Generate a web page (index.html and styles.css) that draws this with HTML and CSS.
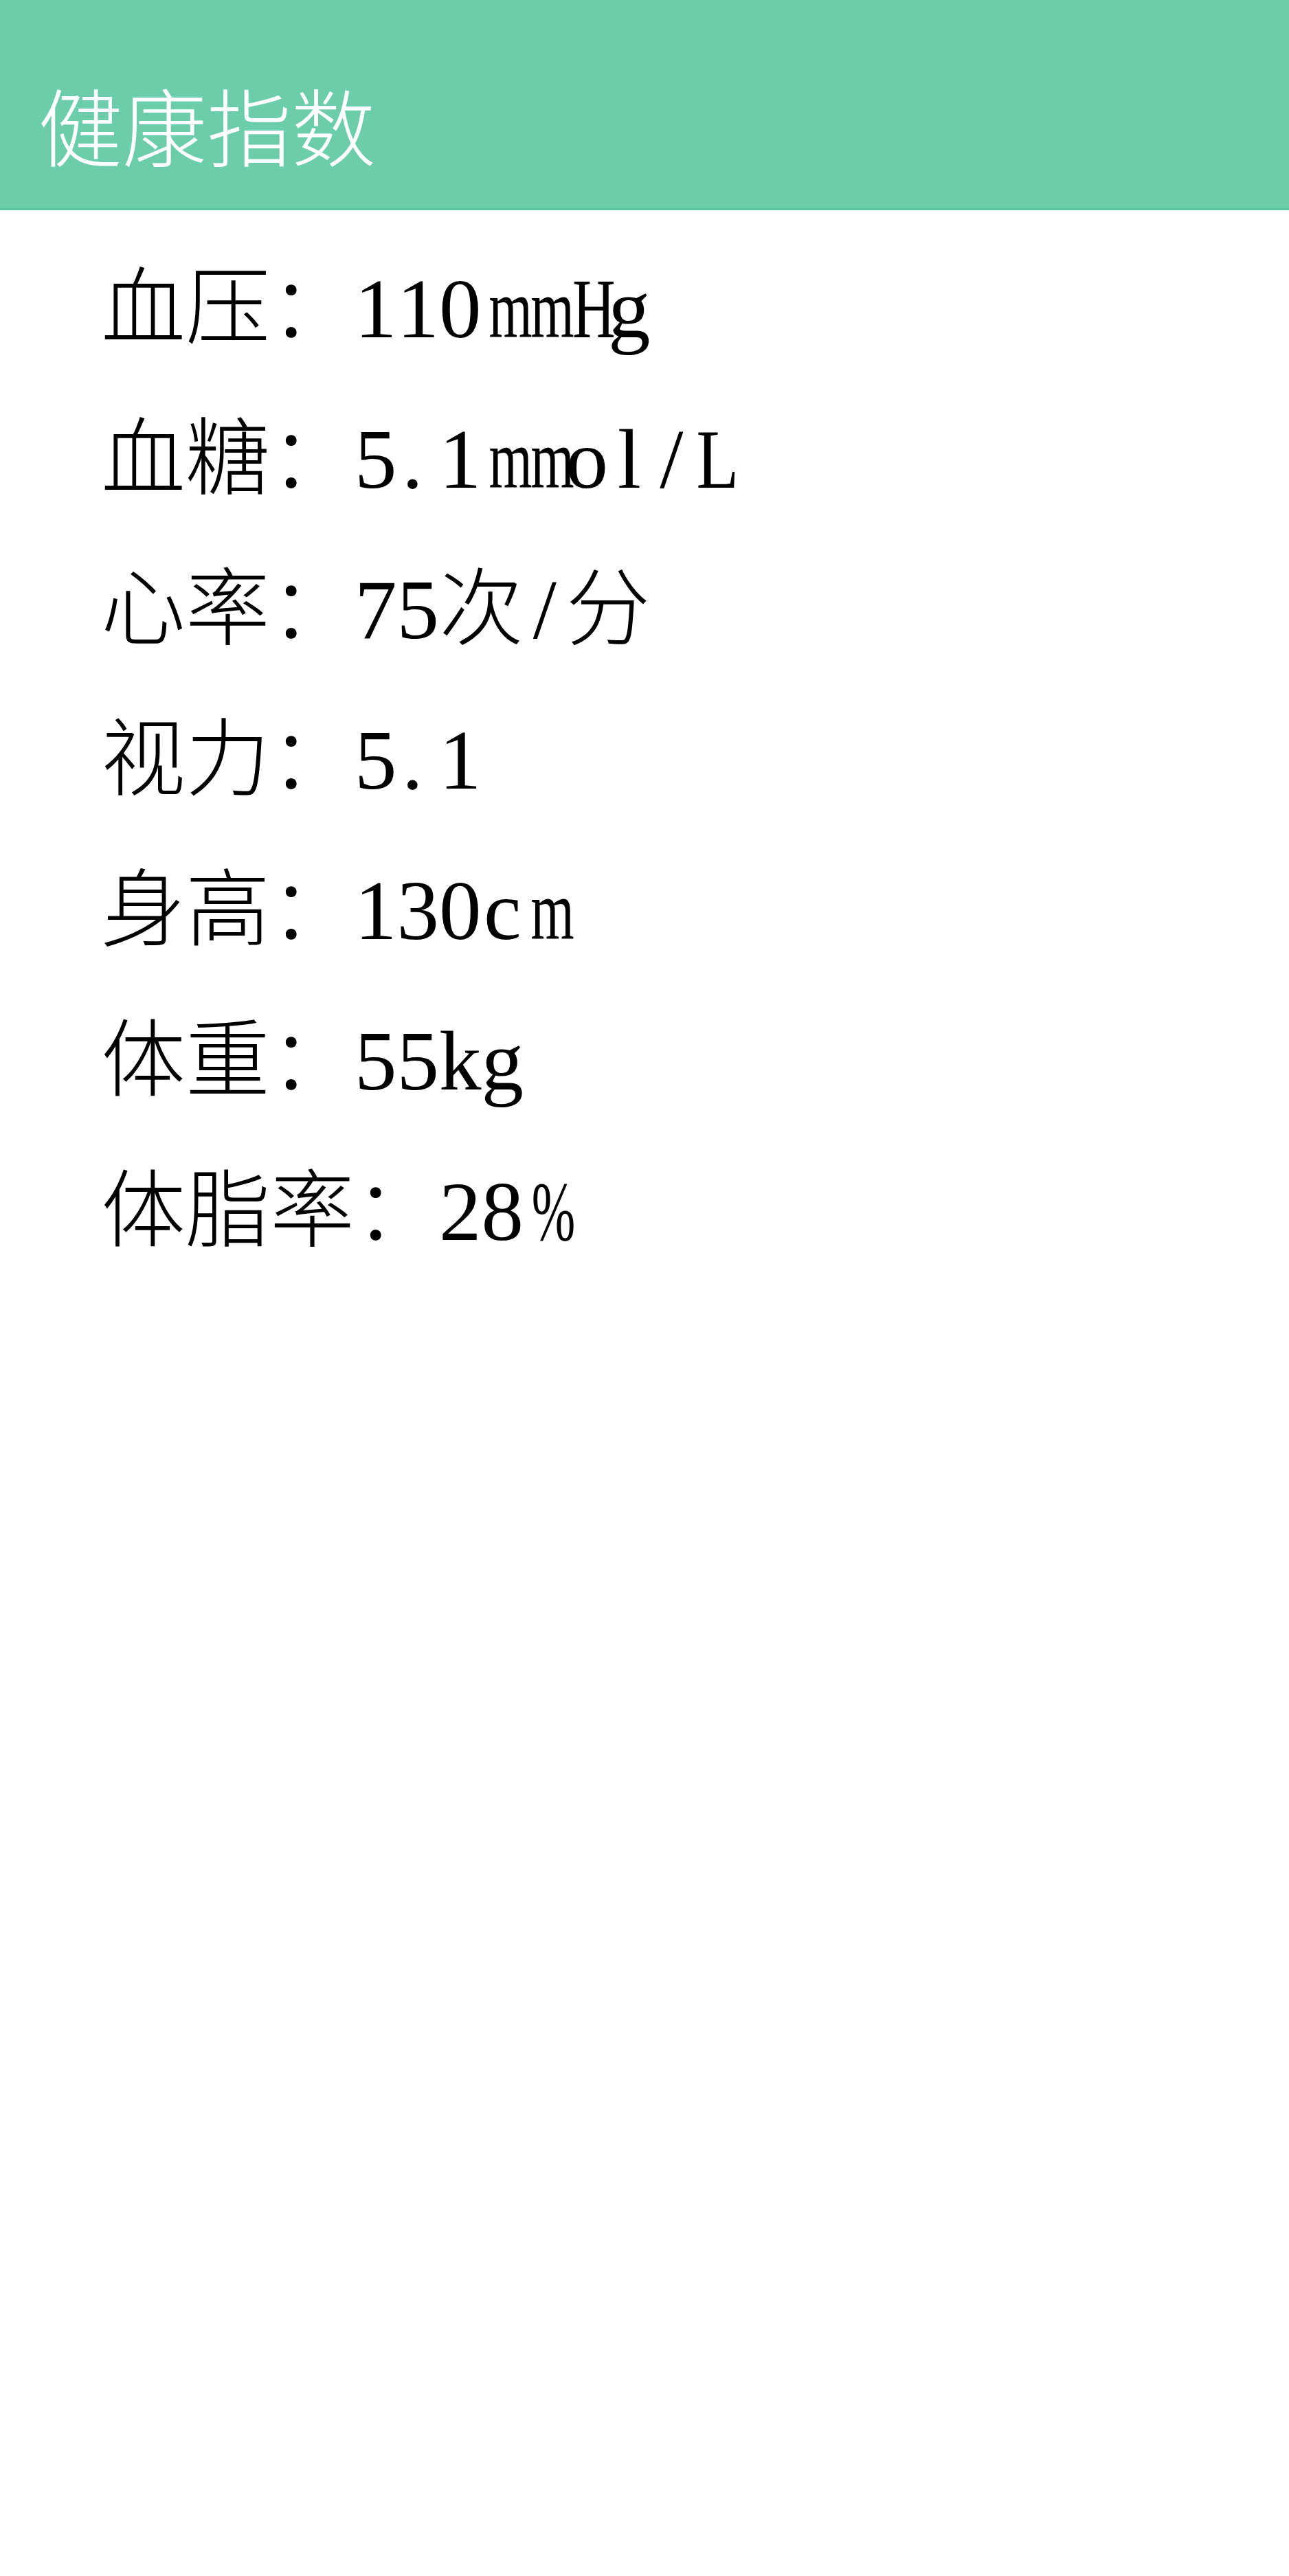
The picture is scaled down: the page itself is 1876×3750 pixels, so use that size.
FILE: index.html
```html
<!DOCTYPE html>
<html lang="zh-CN">
<head>
<meta charset="utf-8">
<title>健康指数</title>
<link rel="stylesheet" href="styles.css">
</head>
<body>
<header class="appbar">
  <h1 class="title">健康指数</h1>
</header>
<main class="list">
  <p class="row">血压：<span class="h">1</span><span class="h">1</span><span class="h">0</span><span class="h sm">m</span><span class="h sm">m</span><span class="h sh">H</span><span class="h">g</span></p>
  <p class="row">血糖：<span class="h">5</span><span class="h dot">.</span><span class="h">1</span><span class="h sm">m</span><span class="h sm">m</span><span class="h">o</span><span class="h">l</span><span class="h">/</span><span class="h sl">L</span></p>
  <p class="row">心率：<span class="h">7</span><span class="h">5</span>次<span class="h">/</span>分</p>
  <p class="row">视力：<span class="h">5</span><span class="h dot">.</span><span class="h">1</span></p>
  <p class="row">身高：<span class="h">1</span><span class="h">3</span><span class="h">0</span><span class="h">c</span><span class="h sm">m</span></p>
  <p class="row">体重：<span class="h">5</span><span class="h">5</span><span class="h">k</span><span class="h">g</span></p>
  <p class="row">体脂率：<span class="h">2</span><span class="h">8</span><span class="h sp">%</span></p>
</main>
</body>
</html>
```
FILE: styles.css
```css
html, body {
  margin: 0;
  padding: 0;
  background: #ffffff;
}

body {
  font-family: "Noto Sans CJK SC", "Noto Sans", sans-serif;
}

.appbar {
  background: #6ccdab;
  border-bottom: 3px solid #58c69e;
  padding: 118px 0 0 55px;
  box-sizing: content-box;
  height: 185px;
}

.title {
  margin: 0;
  font-size: 123px;
  line-height: 123px;
  font-weight: 300;
  color: #ffffff;
}

.list {
  padding: 22px 0 0 147px;
}

.row {
  margin: 0;
  height: 219px;
  font-size: 123px;
  line-height: 219px;
  font-weight: 300;
  color: #000000;
  white-space: nowrap;
  overflow: visible;
}

.h {
  display: inline-block;
  width: 0.5em;
  line-height: 1;
  text-align: center;
  font-family: "Liberation Serif", serif;
  font-weight: 400;
}

.dot {
  text-align: left;
  text-indent: 0.06em;
}

.sm {
  transform: scaleX(0.66);
}

.sh {
  transform: scaleX(0.7);
}

.sl {
  transform: scaleX(0.82);
}

.sp {
  transform: scaleX(0.62);
}
```
